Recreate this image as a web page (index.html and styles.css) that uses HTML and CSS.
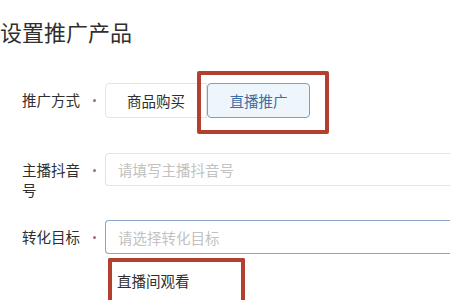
FILE: index.html
```html
<!DOCTYPE html>
<html lang="zh-CN">
<head>
<meta charset="utf-8">
<link rel="stylesheet" href="styles.css">
</head>
<body>
<main class="page">
  <h1 class="title">设置推广产品</h1>
  <form class="form">
    <div class="row row-first">
      <label class="label">推广方式</label>
      <span class="req"><i></i></span>
      <div class="radio-group">
        <span class="radio">商品购买</span>
        <span class="radio radio-active highlighted">直播推广</span>
      </div>
    </div>
    <div class="row">
      <label class="label">主播抖音号</label>
      <span class="req"><i></i></span>
      <div class="input">请填写主播抖音号</div>
    </div>
    <div class="row">
      <label class="label">转化目标</label>
      <span class="req"><i></i></span>
      <div class="select-wrap">
        <div class="input input-focus">请选择转化目标</div>
        <div class="dropdown">
          <div class="option">直播间观看</div>
        </div>
      </div>
    </div>
  </form>
</main>
</body>
</html>
```
FILE: styles.css
```css
html, body {
  margin: 0;
  padding: 0;
  background: #ffffff;
}
body {
  font-family: "Noto Sans CJK SC", "Noto Sans", sans-serif;
  color: #333333;
}
.page {
  width: 450px;
  height: 300px;
  overflow: hidden;
}
.title {
  margin: 0;
  padding-top: 16px;
  font-size: 22px;
  line-height: 30px;
  font-weight: 400;
  color: #2f2f2f;
}
.form {
  display: flex;
  flex-direction: column;
  padding-top: 37px;
  padding-left: 22px;
}
.row {
  display: flex;
  align-items: flex-start;
  height: 67px;
}
.row-first {
  height: 70px;
}
.label {
  width: 62px;
  font-size: 14.5px;
  line-height: 20px;
  padding-top: 7px;
  color: #2f2f2f;
}
.req {
  width: 21px;
  height: 34px;
  display: flex;
  align-items: center;
  justify-content: center;
}
.req i {
  width: 3px;
  height: 3px;
  border-radius: 50%;
  background: #a86a6a;
}
.radio-group {
  display: flex;
}
.radio {
  display: flex;
  align-items: center;
  justify-content: center;
  width: 102px;
  height: 35px;
  box-sizing: border-box;
  border: 1px solid #e4e4e4;
  background: #ffffff;
  font-size: 14.5px;
  color: #2f2f2f;
}
.radio:first-child {
  border-radius: 4px 0 0 4px;
}
.radio-active {
  width: 103px;
  border-color: #7aa0c6;
  background: #eef5fb;
  color: #3b6ea8;
  border-radius: 4px;
}
.highlighted {
  position: relative;
}
.highlighted::after {
  content: "";
  position: absolute;
  left: -11px;
  top: -13px;
  right: -20px;
  bottom: -17px;
  border: 4px solid #b3402f;
  border-radius: 2px;
}
.input {
  flex: 1;
  height: 33px;
  box-sizing: border-box;
  border: 1px solid #e3e3e3;
  border-right: 0;
  border-radius: 4px 0 0 4px;
  padding-left: 12px;
  display: flex;
  align-items: center;
  font-size: 14.5px;
  color: #c2c2c2;
}
.select-wrap {
  flex: 1;
  position: relative;
  display: flex;
}
.input-focus {
  height: 34px;
  border-color: #8aa6c6;
}
.dropdown {
  position: absolute;
  left: 3px;
  top: 38px;
  width: 137px;
  height: 42px;
  box-sizing: border-box;
  border: 4px solid #b3402f;
  border-bottom: 0;
  background: #ffffff;
  border-radius: 2px 2px 0 0;
}
.option {
  padding: 9px 0 0 5px;
  font-size: 14.5px;
  line-height: 20px;
  color: #2f2f2f;
}
```
